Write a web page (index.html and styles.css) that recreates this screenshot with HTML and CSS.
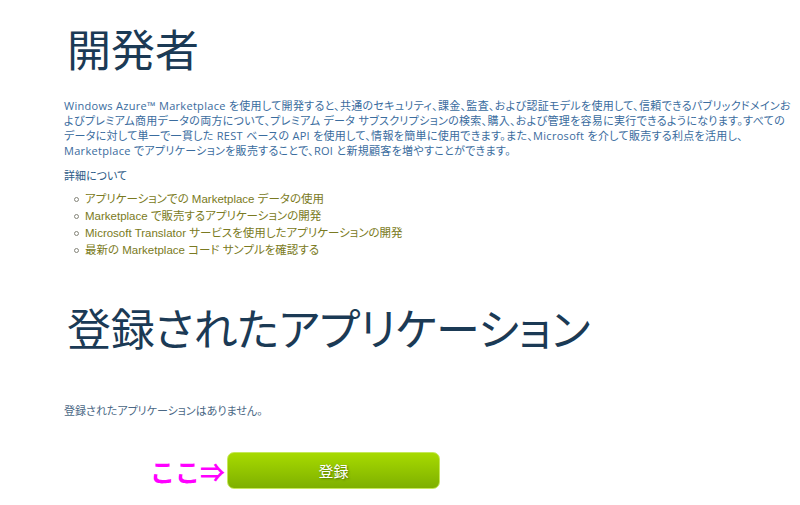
FILE: index.html
```html
<!DOCTYPE html>
<html lang="ja">
<head>
<meta charset="utf-8">
<title>開発者</title>
<link rel="stylesheet" href="styles.css">
</head>
<body>
<main class="page">
  <h1 class="title">開発者</h1>
  <p class="intro">Windows Azure™ Marketplace を使用して開発すると、共通のセキュリティ、課金、監査、および認証モデルを使用して、信頼できるパブリックドメインおよびプレミアム商用データの両方について、プレミアム データ サブスクリプションの検索、購入、および管理を容易に実行できるようになります。すべてのデータに対して単一で一貫した REST ベースの API を使用して、情報を簡単に使用できます。また、Microsoft を介して販売する利点を活用し、Marketplace でアプリケーションを販売することで、ROI と新規顧客を増やすことができます。</p>
  <p class="more">詳細について</p>
  <ul class="links">
    <li><a href="#">アプリケーションでの Marketplace データの使用</a></li>
    <li><a href="#">Marketplace で販売するアプリケーションの開発</a></li>
    <li><a href="#">Microsoft Translator サービスを使用したアプリケーションの開発</a></li>
    <li><a href="#">最新の Marketplace コード サンプルを確認する</a></li>
  </ul>
  <h2 class="title title-apps">登録されたアプリケーション</h2>
  <p class="empty">登録されたアプリケーションはありません。</p>
  <div class="actions">
    <span class="note">ここ⇒</span>
    <button class="register" type="button">登録</button>
  </div>
</main>
</body>
</html>
```
FILE: styles.css
```css
html, body {
  margin: 0;
  padding: 0;
  background: #ffffff;
}
body {
  font-family: "Open Sans", "Noto Sans CJK JP", sans-serif;
  font-feature-settings: "palt";
}
.page {
  padding: 0 8px 0 64px;
}
.title {
  margin: 0;
  font-family: "Open Sans", "Noto Sans CJK JP", sans-serif;
  font-weight: 400;
  font-size: 44px;
  line-height: 48px;
  color: #1b3a55;
}
h1.title {
  padding-top: 26px;
  padding-left: 3px;
}
.title-apps {
  margin-top: 46px;
  padding-left: 3px;
  letter-spacing: -0.3px;
}
.intro {
  margin: 24px 0 0;
  font-size: 11px;
  letter-spacing: 0.3px;
  line-height: 15px;
  color: #3a6c9e;
}
.more {
  margin: 10px 0 0;
  font-size: 11px;
  line-height: 15px;
  color: #2b5a86;
}
.links {
  margin: 8px 0 0;
  padding: 0 0 0 21px;
  list-style: none;
}
.links li {
  position: relative;
  font-family: "Liberation Sans", "Noto Sans CJK JP", sans-serif;
  font-size: 11.5px;
  line-height: 17px;
}
.links li::before {
  content: "";
  position: absolute;
  left: -11px;
  top: 6px;
  width: 3px;
  height: 3px;
  border: 1px solid #85857a;
  border-radius: 50%;
}
.links a {
  color: #7a7a22;
  text-decoration: none;
}
.empty {
  margin: 50px 0 0;
  font-size: 11px;
  line-height: 15px;
  color: #4a6784;
}
.actions {
  display: flex;
  align-items: center;
  margin-top: 34px;
  padding-left: 86px;
}
.note {
  font-family: "Noto Sans CJK JP", sans-serif;
  font-feature-settings: normal;
  font-weight: 700;
  font-size: 25px;
  line-height: 30px;
  color: #ff00ff;
  margin-right: 2px;
}
.register {
  width: 213px;
  height: 37px;
  border: 1px solid #c6e85a;
  border-radius: 7px;
  background: linear-gradient(#a7da00, #7eb000);
  color: #ffffff;
  font-family: "Noto Sans CJK JP", sans-serif;
  font-size: 15px;
  text-shadow: 1px 1px 2px rgba(60, 80, 0, 0.7);
  padding: 0;
}
```
